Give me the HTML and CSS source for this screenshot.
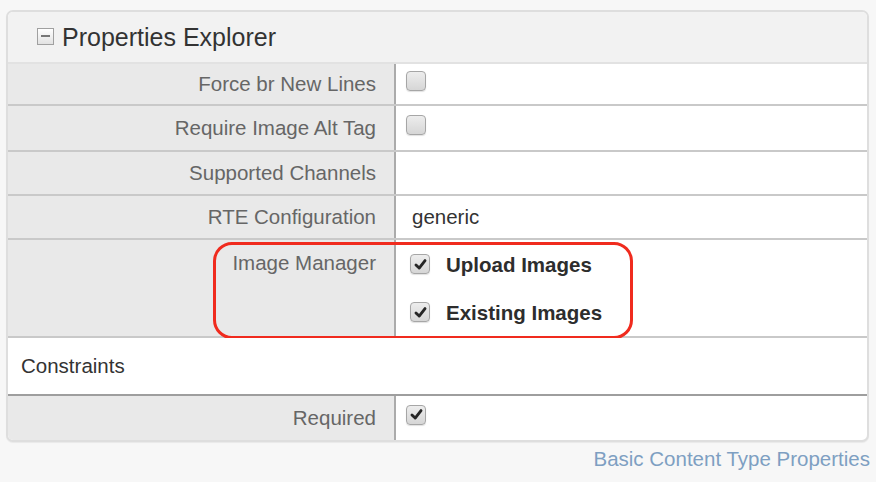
FILE: index.html
```html
<!DOCTYPE html>
<html>
<head>
<meta charset="utf-8">
<link rel="stylesheet" href="styles.css">
</head>
<body>
<div class="panel">
  <div class="header">
    <span class="toggle"><span class="toggle-bar"></span></span>
    <span class="title">Properties Explorer</span>
  </div>
  <div class="row h40">
    <div class="label">Force br New Lines</div>
    <div class="value"><span class="cb"></span></div>
  </div>
  <div class="row h44">
    <div class="label">Require Image Alt Tag</div>
    <div class="value"><span class="cb"></span></div>
  </div>
  <div class="row h42">
    <div class="label">Supported Channels</div>
    <div class="value"></div>
  </div>
  <div class="row h42">
    <div class="label">RTE Configuration</div>
    <div class="value text">generic</div>
  </div>
  <div class="row h96 top">
    <div class="label">Image Manager</div>
    <div class="value list">
      <div class="opt"><span class="cb checked"><svg viewBox="0 0 18 18" width="18" height="18"><path d="M4.2 9.4 L7.6 12.8 L13.8 4.8" fill="none" stroke="#262626" stroke-width="3" stroke-linecap="round" stroke-linejoin="round"/></svg></span><span class="opt-text">Upload Images</span></div>
      <div class="opt"><span class="cb checked"><svg viewBox="0 0 18 18" width="18" height="18"><path d="M4.2 9.4 L7.6 12.8 L13.8 4.8" fill="none" stroke="#262626" stroke-width="3" stroke-linecap="round" stroke-linejoin="round"/></svg></span><span class="opt-text">Existing Images</span></div>
    </div>
    <div class="highlight"></div>
  </div>
  <div class="section">Constraints</div>
  <div class="row h44 last">
    <div class="label">Required</div>
    <div class="value"><span class="cb checked"><svg viewBox="0 0 18 18" width="18" height="18"><path d="M4.2 9.4 L7.6 12.8 L13.8 4.8" fill="none" stroke="#262626" stroke-width="3" stroke-linecap="round" stroke-linejoin="round"/></svg></span></div>
  </div>
</div>
<div class="footer"><a class="link">Basic Content Type Properties</a></div>
</body>
</html>
```
FILE: styles.css
```css
html, body {
  margin: 0;
  padding: 0;
  background: #f7f7f7;
}
body {
  font-family: "Liberation Sans", Arial, sans-serif;
  font-size: 20.5px;
  color: #333;
}
.panel {
  margin: 10px 0 0 6px;
  width: 863px;
  box-sizing: border-box;
  border: 2px solid #dedede;
  border-radius: 7px;
  background: #fff;
  box-shadow: 0 1px 1px rgba(0,0,0,0.06);
}
.header {
  height: 50px;
  background: #f2f2f2;
  border-bottom: 2px solid #e2e2e2;
  border-radius: 5px 5px 0 0;
  display: flex;
  align-items: center;
  padding-left: 29px;
}
.toggle {
  width: 15px;
  height: 15px;
  border: 1px solid #a0a0a0;
  background: linear-gradient(#ffffff, #e2e2e2);
  display: flex;
  align-items: center;
  justify-content: center;
  margin-right: 8px;
  margin-top: -2px;
}
.toggle-bar {
  width: 9px;
  height: 2px;
  background: #777;
}
.title {
  font-size: 25px;
  color: #333;
}
.row {
  display: grid;
  grid-template-columns: 388px 1fr;
  border-bottom: 2px solid #c9c9c9;
  position: relative;
}
.h40 { height: 40px; }
.h42 { height: 42px; }
.h44 { height: 44px; }
.h96 { height: 96px; }
.row.last { border-bottom: none; }
.label {
  background: #e9e9e9;
  border-right: 2px solid #ababab;
  color: #666;
  text-align: right;
  padding-right: 18px;
  display: flex;
  align-items: center;
  justify-content: flex-end;
}
.row.top .label {
  align-items: flex-start;
  padding-top: 11px;
}
.value {
  display: flex;
  align-items: center;
  padding-left: 10px;
}
.value.text {
  padding-left: 16px;
  color: #333;
}
.cb {
  width: 18px;
  height: 18px;
  border: 1px solid #a6a6a6;
  border-radius: 4px;
  background: linear-gradient(#ededed, #d6d6d6);
  box-shadow: 0 1px 1px rgba(0,0,0,0.12);
  margin-top: -7px;
  display: flex;
  align-items: center;
  justify-content: center;
  flex: none;
}
.cb svg {
  display: block;
  width: 17px;
  height: 17px;
}
.value.list {
  flex-direction: column;
  align-items: flex-start;
  justify-content: flex-start;
  padding-left: 14px;
  padding-top: 14px;
  gap: 28px;
}
.opt {
  display: flex;
  align-items: center;
  height: 20px;
}
.opt .cb { margin-top: 0; }
.opt-text {
  font-weight: bold;
  color: #2d2d2d;
  margin-left: 16px;
  margin-top: 2px;
}
.highlight {
  position: absolute;
  left: 205px;
  top: 2px;
  width: 414px;
  height: 91px;
  border: 3px solid #f02b1e;
  border-radius: 19px;
  pointer-events: none;
}
.section {
  height: 56px;
  border-bottom: 2px solid #9e9e9e;
  display: flex;
  align-items: center;
  padding-left: 13px;
  color: #333;
  background: #fff;
  position: relative;
}
.row.last .label { border-bottom-left-radius: 5px; }
.footer {
  display: flex;
  justify-content: flex-end;
  padding-right: 6px;
  margin-top: 5px;
}
.link {
  color: #7e9fc2;
  line-height: 24px;
}
```
